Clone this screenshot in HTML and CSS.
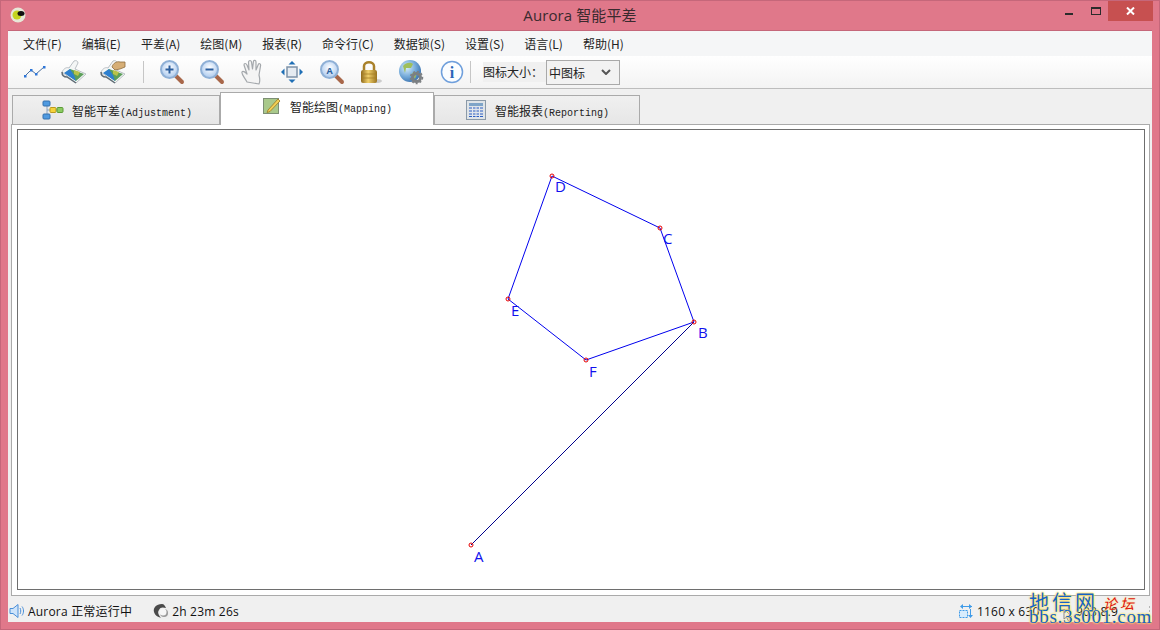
FILE: index.html
```html
<!DOCTYPE html>
<html lang="zh-CN">
<head>
<meta charset="utf-8">
<title>Aurora 智能平差</title>
<link rel="stylesheet" href="styles.css">
</head>
<body>
<svg class="defs" width="0" height="0" aria-hidden="true">
  <defs>
    <radialGradient id="lens" cx="50%" cy="40%" r="60%"><stop offset="0" stop-color="#ffffff"/><stop offset="1" stop-color="#a9c8ee"/></radialGradient>
    <linearGradient id="brass" x1="0" y1="0" x2="1" y2="0"><stop offset="0" stop-color="#8f6a1c"/><stop offset=".45" stop-color="#f0cf6a"/><stop offset="1" stop-color="#9a7420"/></linearGradient>
    <radialGradient id="globe" cx="35%" cy="35%" r="70%"><stop offset="0" stop-color="#d8eefb"/><stop offset=".6" stop-color="#72a8d8"/><stop offset="1" stop-color="#3d74b0"/></radialGradient>
    <symbol id="map" viewBox="0 0 26 24">
      <path d="M1 12 C3 8 6 7 8 8 L13 1 C15 0 17 1 17 3 L14 9 L25 14 L15 23 Z" fill="#f4f6f6" stroke="#b9bfc4" stroke-width="1"/>
      <path d="M4 13 L9 9 L23 14 L15 21 Z" fill="#5c9f5a"/>
      <path d="M3 13 L9 9 L13 15 L15 21 Z" fill="#2d7fd0"/>
      <path d="M13 10 L19 12 L17 16 L13 14 Z" fill="#b9c24a"/>
      <path d="M1 12 C1 16 4 17 6 17 L15 23" fill="none" stroke="#5f6b74" stroke-width="1.500"/>
    </symbol>
    <symbol id="lensbody" viewBox="0 0 26 26">
      <path d="M15 15 L23 23" stroke="#a8674a" stroke-width="4" stroke-linecap="round"/>
      <circle cx="10.500" cy="10.500" r="8.500" fill="url(#lens)" stroke="#8fb0d6" stroke-width="2"/>
    </symbol>
  </defs>
</svg>
<div class="window">
  <header class="titlebar">
    <div class="title-left">
      <svg class="app-icon" width="16" height="16" viewBox="0 0 16 16"><circle cx="8" cy="8" r="7.500" fill="#e7e8d8"/><circle cx="7" cy="8" r="4.500" fill="#c5d420"/><ellipse cx="11" cy="6.500" rx="3.500" ry="2.500" fill="#111"/></svg>
    </div>
    <h1 class="title-text">Aurora 智能平差</h1>
    <div class="controls">
      <span class="ctl"><i class="min"></i></span>
      <span class="ctl"><i class="max"></i></span>
      <span class="close">
        <svg width="9" height="8" viewBox="0 0 9 8"><path d="M1 0.500 L8 7.500 M8 0.500 L1 7.500" stroke="#fff" stroke-width="2"/></svg>
      </span>
    </div>
  </header>

  <main class="client">
    <nav class="menubar">
      <span>文件(F)</span><span>编辑(E)</span><span>平差(A)</span><span>绘图(M)</span><span>报表(R)</span><span>命令行(C)</span><span>数据锁(S)</span><span>设置(S)</span><span>语言(L)</span><span>帮助(H)</span>
    </nav>

    <div class="toolbar">
      <span class="tool tool-first">
        <svg width="24" height="16" viewBox="0 0 24 16"><path d="M2 12 L8 6 L13 10 L21 3" fill="none" stroke="#4b6f9c" stroke-width="1"/><g fill="#2e76d8"><rect x="1" y="11" width="2.500" height="2.500"/><rect x="7" y="5" width="2.500" height="2.500"/><rect x="12" y="9" width="2.500" height="2.500"/><rect x="20" y="2" width="2.500" height="2.500"/></g></svg>
      </span>
      <span class="tool tool-narrow"><svg width="26" height="24"><use href="#map"/></svg></span>
      <span class="tool">
        <svg width="26" height="24" viewBox="0 0 26 24"><use href="#map"/><path d="M12 7 C13 3 17 1 20 2 L25 2 L25 7 L20 9 L15 10 Z" fill="#d6ae76" stroke="#8d6d3f" stroke-width=".8"/></svg>
      </span>
      <span class="sep sep-a"></span>
      <span class="tool"><svg width="26" height="26" viewBox="0 0 26 26"><use href="#lensbody"/><path d="M6.500 10.500 H14.500 M10.500 6.500 V14.500" stroke="#2c5f9e" stroke-width="2"/></svg></span>
      <span class="tool"><svg width="26" height="26" viewBox="0 0 26 26"><use href="#lensbody"/><path d="M6.500 10.500 H14.500" stroke="#2c5f9e" stroke-width="2"/></svg></span>
      <span class="tool">
        <svg width="24" height="26" viewBox="0 0 24 26"><path d="M7 23 C5 19 1 15 2 13 C3 11 6 14 7 15 L4 6 C4 4 6 4 7 6 L9 11 L8.500 3 C9 1 11 1 11.500 3 L12.500 10 L13.500 2 C14 1 16 1 16 3 L16 11 L18.500 5 C19.500 4 21 5 20.500 7 L19 16 C20 20 20 23 19 25 Z" fill="#f4f4f4" stroke="#a4a8ac" stroke-width="1.200" stroke-linejoin="round"/></svg>
      </span>
      <span class="tool">
        <svg width="24" height="24" viewBox="0 0 24 24"><rect x="7" y="7" width="10" height="10" fill="#e6ebf1" stroke="#7e92a8" stroke-width="1.500"/><g fill="#1f6fb5"><path d="M12 1 L15.500 4.500 H8.500 Z"/><path d="M12 23 L15.500 19.500 H8.500 Z"/><path d="M1 12 L4.500 8.500 V15.500 Z"/><path d="M23 12 L19.500 8.500 V15.500 Z"/></g></svg>
      </span>
      <span class="tool"><svg width="26" height="26" viewBox="0 0 26 26"><use href="#lensbody"/><text class="lens-a" x="10.500" y="14.500" text-anchor="middle">A</text></svg></span>
      <span class="tool tool-narrow">
        <svg width="24" height="26" viewBox="0 0 24 26"><ellipse cx="17" cy="22" rx="6" ry="2" fill="#ccc"/><path d="M5 12 V7 C5 2 15 2 15 7 V12" fill="none" stroke="#a9812a" stroke-width="2.500"/><rect x="2" y="11" width="16" height="13" rx="2" fill="url(#brass)"/><path d="M3 15 H17 M3 19 H17" stroke="#a67f25" stroke-width=".8"/></svg>
      </span>
      <span class="tool tool-wide">
        <svg width="26" height="26" viewBox="0 0 26 26"><circle cx="12" cy="12" r="11" fill="url(#globe)"/><path d="M5 7 C8 3 13 3 15 5 L13 9 L8 9 L7 14 Z M14 14 L19 13 L17 20 Z" fill="#9fbf5c"/><circle cx="18.500" cy="18.500" r="4" fill="none" stroke="#7b7f82" stroke-width="3"/><circle cx="18.500" cy="18.500" r="6" fill="none" stroke="#7b7f82" stroke-width="1.500" stroke-dasharray="2 2"/></svg>
      </span>
      <span class="tool">
        <svg width="24" height="24" viewBox="0 0 24 24"><circle cx="12" cy="12" r="10.500" fill="#fbfdff" stroke="#6f9fdc" stroke-width="1.500"/><text class="info-i" x="12" y="18" text-anchor="middle">i</text></svg>
      </span>
      <span class="sep sep-b"></span>
      <span class="size-label">图标大小：</span>
      <span class="select"><span>中图标</span><svg width="10" height="6" viewBox="0 0 10 6"><path d="M1 1 L5 5 L9 1" fill="none" stroke="#555" stroke-width="2"/></svg></span>
    </div>

    <div class="tabs">
      <div class="tab tab-first">
        <svg class="tab-icon" width="22" height="20" viewBox="0 0 22 20"><path d="M5 4 V16 M5 10 H17" stroke="#8aa2bd" stroke-width="1"/><rect x="1" y="1" width="7" height="5" rx="1" fill="#4f9ae0" stroke="#3570ad"/><rect x="1" y="14" width="7" height="5" rx="1" fill="#4f9ae0" stroke="#3570ad"/><rect x="8" y="7.500" width="6" height="5" rx="1" fill="#f5d23c" stroke="#bb9a1c"/><rect x="15" y="7.500" width="6" height="5" rx="1" fill="#8ccb62" stroke="#5b9b36"/></svg>
        <span>智能平差<b>(Adjustment)</b></span>
      </div>
      <div class="tab active">
        <svg class="tab-icon" width="20" height="20" viewBox="0 0 20 20"><rect x="1.500" y="2.500" width="15" height="15" fill="#a9c98b" stroke="#7d8f74"/><path d="M6 14 L16 3 L18 5 L8 15.500 L5 16.500 Z" fill="#f2cf55" stroke="#9b7a24" stroke-width=".8"/></svg>
        <span>智能绘图<b>(Mapping)</b></span>
      </div>
      <div class="tab tab-last">
        <svg class="tab-icon" width="20" height="20" viewBox="0 0 20 20"><rect x=".5" y=".5" width="19" height="19" fill="#dfe4e8" stroke="#8b9aa8"/><rect x="3" y="3" width="14" height="3" fill="#7ea4c8"/><path d="M3 8 H17 M3 11 H17 M3 14 H17 M3 16.500 H17" stroke="#2d5fc4"/><path d="M6.500 7 V17 M10 7 V17 M13.500 7 V17" stroke="#e3e8f0"/></svg>
        <span>智能报表<b>(Reporting)</b></span>
      </div>
    </div>

    <section class="panel">
      <div class="canvas">
        <svg class="drawing" viewBox="18 130 1126 459" width="1126" height="459">
          <path class="traverse" d="M471 545 L694 322"/>
          <path class="polygon" d="M694 322 L660 228 L552 176 L508 299 L586 360 Z"/>
          <g class="points">
            <circle cx="471" cy="545" r="2"/><circle cx="694" cy="322" r="2"/><circle cx="660" cy="228" r="2"/><circle cx="552" cy="176" r="2"/><circle cx="508" cy="299" r="2"/><circle cx="586" cy="360" r="2"/>
          </g>
          <g class="labels">
            <text x="474" y="562">A</text><text x="698" y="338">B</text><text x="663" y="244">C</text><text x="555" y="192">D</text><text x="511" y="316">E</text><text x="589" y="377">F</text>
          </g>
        </svg>
      </div>
    </section>

    <footer class="statusbar">
      <svg class="st-icon" width="16" height="16" viewBox="0 0 16 16"><path d="M1 5.500 H4 L9 1.500 V14.500 L4 10.500 H1 Z" fill="#cfe4fa" stroke="#4a8fd8"/><path d="M11 5 C12 7 12 9 11 11 M13 3.500 C15 6 15 10 13 12.500" fill="none" stroke="#4a8fd8"/></svg>
      <span class="st-text">Aurora 正常运行中</span>
      <svg class="st-icon st-clock" width="16" height="16" viewBox="0 0 16 16"><rect width="16" height="16" fill="#eee"/><path d="M9 1 C3 1 0 5 1 9 C2 13 6 14 8 15 C6 12 4 10 6 7 C7 4 10 4 13 5 C12 3 11 1 9 1 Z" fill="#4a4a4a"/><circle cx="11" cy="10" r="4" fill="#9a9a9a"/><circle cx="10" cy="9" r="3.500" fill="#f6f6f6"/></svg>
      <span class="st-text">2h 23m 26s</span>
      <span class="st-spacer"></span>
      <svg class="st-icon" width="16" height="16" viewBox="0 0 16 16"><path d="M1.500 7.500 H9.500 V14.500 H1.500 Z" fill="#d8ecfc" stroke="#3f9be8" stroke-dasharray="2 1"/><path d="M3 3.500 H14 M12.500 6 V14" stroke="#3f9be8"/><path d="M5 1 V6 L2 3.500 Z M11 1 V6 L14 3.500 Z M10 12 H15 L12.500 15 Z" fill="#3f9be8"/></svg>
      <span class="st-text st-size">1160 x 630</span>
      <span class="st-text st-coord">903.8.9</span>
      <span class="grip"></span>
    </footer>
  </main>

  <div class="watermark">
    <span class="wm-cn">地信网</span><span class="wm-forum">论坛</span>
    <svg class="wm-cursor" width="10" height="14" viewBox="0 0 10 14"><path d="M1 1 V11 L3.500 9 L5.500 13 L7 12 L5.500 8.500 H8.500 Z" fill="#f0f0f0" stroke="#8a8a8a"/></svg>
    <span class="wm-url">bbs.3s001.com</span>
  </div>
</div>
</body>
</html>
```
FILE: styles.css
```css
* { box-sizing: border-box; }
html, body { margin: 0; padding: 0; }
body { width: 1160px; height: 630px; overflow: hidden; font-family: "Noto Sans CJK SC", "Open Sans", sans-serif; color: #222; }
.defs { position: absolute; }

.window { position: relative; width: 1160px; height: 630px; background: #e0788a; border: 1px solid #c5677a; display: flex; flex-direction: column; }

.titlebar { height: 29px; display: grid; grid-template-columns: 1fr auto 1fr; align-items: start; flex: none; }
.title-left { padding: 6px 0 0 9px; }
.app-icon { display: block; }
.title-text { margin: 0; padding-top: 4px; font: 400 15px/20px "Open Sans", "Noto Sans CJK SC", sans-serif; color: #3a2a2e; letter-spacing: .1px; }
.controls { display: flex; justify-content: flex-end; padding-right: 6px; }
.ctl { width: 26px; height: 20px; position: relative; display: block; }
.min { position: absolute; left: 1px; top: 12px; width: 8px; height: 2px; background: #2b2b2b; }
.max { position: absolute; left: 1px; top: 6px; width: 10px; height: 8px; border: 1px solid #2b2b2b; border-top-width: 2px; }
.close { width: 45px; height: 20px; background: #c75050; display: flex; align-items: center; justify-content: center; margin-left: -8px; }

.client { width: 1144px; height: 592px; margin-left: 7px; background: #f0f0f0; display: flex; flex-direction: column; border-top: 1px solid #c5677a; flex: none; }

.menubar { height: 25px; flex: none; display: flex; align-items: center; gap: 20px; padding-left: 15px; background: #f5f6f7; font-size: 12px; color: #222; }
.menubar span { line-height: 25px; }

.toolbar { height: 33px; flex: none; display: flex; align-items: center; padding-left: 7px; background: linear-gradient(#ffffff, #f3f3f3); border-bottom: 1px solid #bdbdbd; }
.tool { width: 40px; height: 30px; flex: none; display: flex; align-items: center; justify-content: center; }
.tool svg { display: block; }
.tool-narrow { width: 38px; }
.tool-wide { width: 42px; }
.tool-first { width: 40px; }
.sep { width: 1px; height: 22px; background: #c6c6c6; flex: none; }
.sep-a { margin: 0 8px 0 10px; }
.sep-b { margin: 0 12px 0 -2px; }
.lens-a { font: 700 9px "Open Sans", sans-serif; fill: #2c5f9e; }
.info-i { font: 700 16px "Liberation Serif", serif; fill: #2a66b8; }
.size-label { font-size: 12px; width: 63px; white-space: nowrap; background: #f0f0f0; line-height: 20px; overflow: hidden; }
.select { width: 74px; height: 25px; border: 1px solid #a9a9a9; background: #f2f2f2; display: flex; align-items: center; justify-content: space-between; padding: 0 8px 0 2px; font-size: 12px; }

.tabs { height: 35px; flex: none; display: flex; align-items: flex-end; padding-left: 4px; }
.tab { width: 208px; height: 29px; display: flex; align-items: center; background: linear-gradient(#f0f0f0, #e6e6e6); border: 1px solid #aaa; border-bottom: 0; font-size: 12px; color: #222; }
.tab b { font: 400 10px "Liberation Mono", monospace; }
.tab-icon { flex: none; }
.tab-first { padding-left: 29px; gap: 8px; }
.tab.active { width: 214px; height: 33px; padding-left: 41px; background: #fff; padding-bottom: 6px; margin-bottom: -1px; position: relative; z-index: 1; gap: 8px; }
.tab-last { width: 206px; padding-left: 31px; gap: 9px; }

.panel { height: 472px; flex: none; margin: 0 2px 0 3px; background: #fff; border: 1px solid #aaa; padding: 4px 4px 5px 5px; }
.canvas { width: 1128px; height: 461px; border: 1px solid #6e6e6e; background: #fff; }
.drawing { display: block; }
.traverse { fill: none; stroke: #00008b; stroke-width: 1; }
.polygon { fill: none; stroke: #0000ee; stroke-width: 1; }
.points circle { fill: none; stroke: #e60000; stroke-width: 1; }
.labels text { font: 15px "Open Sans", sans-serif; fill: #1010ee; }

.statusbar { height: 22px; flex: none; margin-top: 4px; display: flex; align-items: center; padding-left: 1px; font: 12px "Open Sans", "Noto Sans CJK SC", sans-serif; letter-spacing: .2px; background: #f0f0f0; color: #111; position: relative; }
.st-icon { flex: none; display: block; margin-right: 3px; }
.st-clock { margin-left: 21px; margin-right: 3px; }
.st-spacer { flex: 1; }
.st-size { width: 99px; }
.st-coord { width: 72px; white-space: nowrap; }
.grip { width: 3px; height: 12px; background: radial-gradient(circle, #b5b5b5 1px, transparent 1px) 0 0 / 3px 4px; margin-right: 1px; }

.watermark { position: absolute; left: 1028px; top: 589px; width: 128px; height: 38px; white-space: nowrap; pointer-events: none; }
.wm-cn { position: absolute; left: 0; top: 0; font: 400 20px/24px "Noto Sans CJK SC", sans-serif; letter-spacing: 3px; color: #1563c8; text-shadow: 0 0 2px #ffe566, 0 0 2px #ffe566, 0 0 2px #ffe566; }
.wm-forum { position: absolute; left: 74px; top: 5px; font: italic 400 14px/16px "Noto Sans CJK SC", serif; letter-spacing: 3px; color: #e01010; text-shadow: 0 0 2px #ffe566; }
.wm-url { position: absolute; left: 0; top: 16px; font: 400 19px/22px "Liberation Serif", serif; letter-spacing: .7px; color: #1563c8; text-shadow: 0 0 2px #ffe566, 0 0 2px #ffe566, 0 0 2px #ffe566; }
.wm-cursor { position: absolute; left: 34px; top: 18px; }
```
